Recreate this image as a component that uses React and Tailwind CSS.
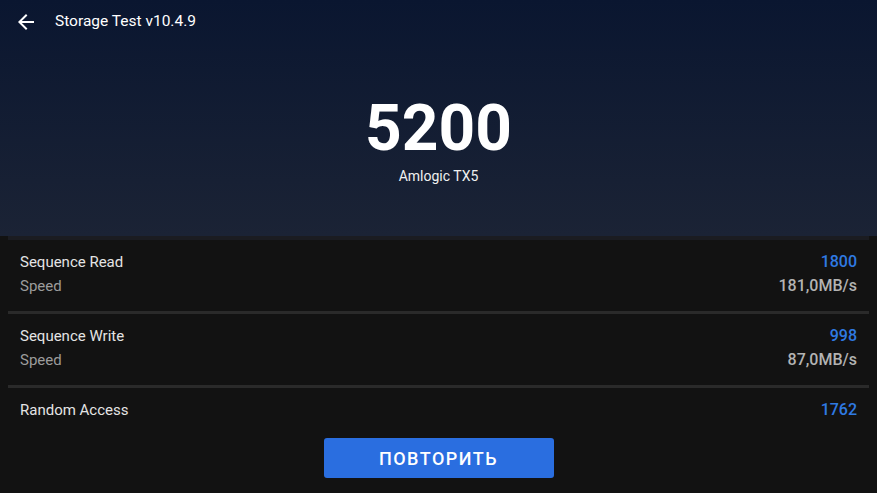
const rows = [
  { name: "Sequence Read", score: "1800", speed: "181,0MB/s" },
  { name: "Sequence Write", score: "998", speed: "87,0MB/s" },
  { name: "Random Access", score: "1762" },
];

// Material-style back arrow
const BackArrow = () => (
  <svg width="24" height="24" viewBox="0 0 24 24" fill="white">
    <path d="M20 11H7.83l5.59-5.59L12 4l-8 8 8 8 1.41-1.41L7.83 13H20v-2z" />
  </svg>
);

const ResultRow = ({ name, score, speed }) => (
  <div className="px-3 pt-[10px] pb-[13px]">
    <div className="flex items-center justify-between h-6">
      <span className="text-[15px] text-[#e4e4e4]">{name}</span>
      <span className="text-[16px] font-medium text-[#2f7ae3]">{score}</span>
    </div>
    {speed && (
      <div className="flex items-center justify-between h-6">
        <span className="text-[15px] text-[#9c9c9c]">Speed</span>
        <span className="text-[16px] font-medium text-[#b3b3b3]">{speed}</span>
      </div>
    )}
  </div>
);

export default function App() {
  return (
    <div
      className="w-full h-[493px] overflow-hidden bg-[#121212] flex flex-col"
      style={{ fontFamily: "Roboto, 'Liberation Sans', sans-serif" }}
    >
      {/* --- Score header --- */}
      <div className="h-[236px] shrink-0 bg-gradient-to-b from-[#0a1630] to-[#1b2335] flex flex-col">
        <div className="h-[44px] flex items-center pl-[14px]">
          <BackArrow />
          <span className="ml-[17px] text-[15.5px] text-white">
            Storage Test v10.4.9
          </span>
        </div>
        <div className="flex flex-col items-center pt-[53px]">
          <p className="text-[64px] leading-none font-bold text-white">5200</p>
          <p className="mt-[5px] text-[14px] text-[#f0f0f0]">Amlogic TX5</p>
        </div>
      </div>

      {/* --- Results list --- */}
      <div className="mx-2 h-[4px] bg-[#1b1c21]" />
      <div className="mx-2">
        {rows.map((row, i) => (
          <div key={row.name}>
            {i > 0 && <div className="h-[3px] bg-[#2a2a2a]" />}
            <ResultRow {...row} />
          </div>
        ))}
      </div>

      <div className="flex justify-center mt-[3px]">
        <button className="w-[230px] h-[40px] rounded-[3px] bg-[#2a6ee0] text-white text-[18px] font-medium tracking-[1.5px]">
          ПОВТОРИТЬ
        </button>
      </div>
    </div>
  );
}
